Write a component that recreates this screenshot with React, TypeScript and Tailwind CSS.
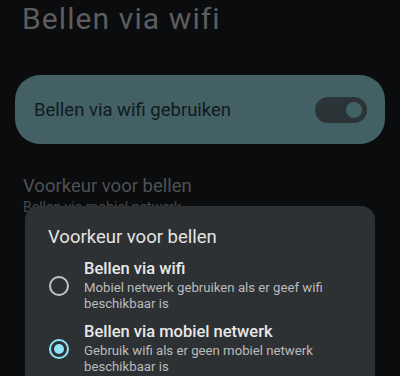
import type { ReactNode } from 'react';

const OPTIONS = [
  {
    id: 'wifi',
    title: 'Bellen via wifi',
    desc: 'Mobiel netwerk gebruiken als er geef wifi beschikbaar is',
  },
  {
    id: 'mobile',
    title: 'Bellen via mobiel netwerk',
    desc: 'Gebruik wifi als er geen mobiel netwerk beschikbaar is',
  },
] as const;

function Radio({ checked }: { checked: boolean }) {
  return (
    <span
      className={`flex h-[20px] w-[20px] shrink-0 items-center justify-center rounded-full border-2 ${
        checked ? 'border-[#8fe2f5]' : 'border-[#c2c5c6]'
      }`}
    >
      {checked && <span className="h-[10px] w-[10px] rounded-full bg-[#8fe2f5]" />}
    </span>
  );
}

function Toggle() {
  return (
    <div className="flex h-[26px] w-[52px] items-center justify-end rounded-full bg-[#2b3437] pr-[2px]">
      <span className="h-[22px] w-[22px] rounded-full border-[3px] border-[#2b3437] bg-[#436165]" />
    </div>
  );
}

function Dialog({ children }: { children: ReactNode }) {
  return (
    <div className="absolute left-[25px] right-[25px] top-[206px] h-[200px] rounded-[14px] bg-[#2e3133] pl-[23px] pr-[20px] pt-[19px]">
      {children}
    </div>
  );
}

export default function App() {
  const selected = 'mobile';

  return (
    <div
      className="relative h-[376px] w-[400px] overflow-hidden bg-[#0b0c0e]"
      style={{ fontFamily: 'Roboto, "Noto Sans", sans-serif' }}
    >
      <h1 className="pl-[22px] pt-[1px] text-[30px] leading-[36px] tracking-[1.1px] text-[#5b5d5f]">
        Bellen via wifi
      </h1>

      <div className="mx-[15px] mt-[38px] flex h-[69px] items-center justify-between rounded-[25px] bg-[#436165] pl-[19px] pr-[18px]">
        <span className="text-[18.5px] leading-[24px] text-[#0f1a1c]">Bellen via wifi gebruiken</span>
        <Toggle />
      </div>

      <div className="pl-[23px] pt-[30px]">
        <div className="text-[18.5px] leading-[24px] text-[#4f5153]">Voorkeur voor bellen</div>
        <div className="text-[14px] leading-[18px] text-[#45474a]">Bellen via mobiel netwerk</div>
      </div>

      <Dialog>
        <div className="text-[18.5px] leading-[24px] text-[#e3e3e3]">Voorkeur voor bellen</div>
        <div className="mt-[8px] flex flex-col gap-[8px]">
          {OPTIONS.map((o) => (
            <div key={o.id} className="flex items-center gap-[15px] pl-[1px]">
              <span className="pt-[3px]">
                <Radio checked={o.id === selected} />
              </span>
              <div className="flex flex-col">
                <span className="text-[16.5px] font-medium leading-[23px] text-[#e8e8e8]">{o.title}</span>
                <span className="text-[13.2px] leading-[16px] text-[#b9bcbd]">{o.desc}</span>
              </div>
            </div>
          ))}
        </div>
      </Dialog>
    </div>
  );
}
